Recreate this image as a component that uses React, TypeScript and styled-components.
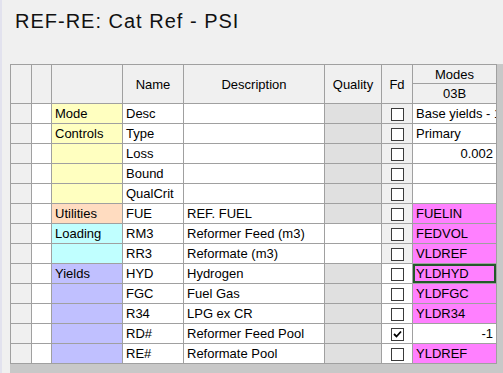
import React from "react";
import styled, { createGlobalStyle } from "styled-components";

const GlobalStyle = createGlobalStyle`
  html, body {
    margin: 0;
    padding: 0;
    background: #f0f0f0;
  }
  body {
    font-family: "Liberation Sans", Arial, sans-serif;
    color: #000;
  }
`;

const YELLOW = "#ffffc0";
const PEACH = "#ffdcc0";
const CYAN = "#c0ffff";
const LAVENDER = "#c0c0ff";
const MAGENTA = "#ff80ff";
const QUALITY_GREY = "#e0e0e0";
const FACE = "#f0f0f0";

const Page = styled.div`
  width: 503px;
  height: 373px;
  overflow: hidden;
  box-sizing: border-box;
  border-left: 2px solid #e2e2ee;
  background: ${FACE};
`;

const Title = styled.h1`
  margin: 0;
  padding: 11px 0 0 13px;
  height: 64px;
  box-sizing: border-box;
  font-size: 20px;
  line-height: 20px;
  font-weight: normal;
  letter-spacing: 1px;
  color: #111;
`;

const Workspace = styled.div`
  margin-left: 8px;
  height: 309px;
  background: #c8c8c8;
`;

const Grid = styled.div`
  display: grid;
  grid-template-columns: 20px 19px 70px 60px 140px 56px 30px 83px;
  grid-template-rows: 18px 19px repeat(13, 19px);
  gap: 1px;
  padding: 1px;
  width: max-content;
  background: #a0a0a0;
  font-size: 13px;
`;

const HeadCell = styled.div<{ $span?: boolean; $col?: number }>`
  background: ${FACE};
  display: flex;
  align-items: center;
  justify-content: center;
  grid-row: ${(p) => (p.$span ? "span 2" : "auto")};
  ${(p) => (p.$col ? `grid-column: ${p.$col};` : "")}
`;

const Cell = styled.div<{ $bg?: string; $right?: boolean; $selected?: boolean }>`
  background: ${(p) => p.$bg || "#fff"};
  line-height: 20px;
  padding: 0 3px;
  white-space: nowrap;
  overflow: hidden;
  text-align: ${(p) => (p.$right ? "right" : "left")};
  ${(p) => (p.$selected ? "box-shadow: inset 0 0 0 2px #24592a;" : "")}
`;

const CheckCell = styled.div<{ $bg?: string }>`
  background: ${(p) => p.$bg || "#fff"};
  display: flex;
  align-items: center;
  justify-content: center;
  padding-top: 2px;
`;

const Box = styled.span`
  width: 13px;
  height: 13px;
  box-sizing: border-box;
  border: 1px solid #3a3a3a;
  background: #fff;
  display: inline-flex;
  align-items: center;
  justify-content: center;
`;

type Row = {
  cat: string;
  catBg: string;
  name: string;
  desc?: string;
  qualityBg?: string;
  fdBg?: string;
  checked?: boolean;
  mode?: string;
  modeBg?: string;
  modeRight?: boolean;
  selected?: boolean;
};

const rows: Row[] = [
  { cat: "Mode", catBg: YELLOW, name: "Desc", fdBg: FACE, mode: "Base yields - 1" },
  { cat: "Controls", catBg: YELLOW, name: "Type", fdBg: FACE, mode: "Primary" },
  { cat: "", catBg: YELLOW, name: "Loss", fdBg: FACE, mode: "0.002", modeRight: true },
  { cat: "", catBg: YELLOW, name: "Bound", fdBg: FACE },
  { cat: "", catBg: YELLOW, name: "QualCrit", fdBg: FACE },
  { cat: "Utilities", catBg: PEACH, name: "FUE", desc: "REF. FUEL", fdBg: FACE, mode: "FUELIN", modeBg: MAGENTA },
  { cat: "Loading", catBg: CYAN, name: "RM3", desc: "Reformer Feed (m3)", qualityBg: "#fff", fdBg: FACE, mode: "FEDVOL", modeBg: MAGENTA },
  { cat: "", catBg: CYAN, name: "RR3", desc: "Reformate (m3)", qualityBg: "#fff", fdBg: FACE, mode: "VLDREF", modeBg: MAGENTA },
  { cat: "Yields", catBg: LAVENDER, name: "HYD", desc: "Hydrogen", mode: "YLDHYD", modeBg: MAGENTA, selected: true },
  { cat: "", catBg: LAVENDER, name: "FGC", desc: "Fuel Gas", mode: "YLDFGC", modeBg: MAGENTA },
  { cat: "", catBg: LAVENDER, name: "R34", desc: "LPG ex CR", mode: "YLDR34", modeBg: MAGENTA },
  { cat: "", catBg: LAVENDER, name: "RD#", desc: "Reformer Feed Pool", checked: true, mode: "-1", modeRight: true },
  { cat: "", catBg: LAVENDER, name: "RE#", desc: "Reformate Pool", mode: "YLDREF", modeBg: MAGENTA },
];

const Check = ({ checked }: { checked?: boolean }) => (
  <Box>
    {checked && (
      <svg width="9" height="9" viewBox="0 0 9 9">
        <path d="M1 4 L3.5 6.5 L8 1.5" fill="none" stroke="#000" strokeWidth="1.8" />
      </svg>
    )}
  </Box>
);

export default function App() {
  return (
    <Page>
      <GlobalStyle />
      <Title>REF-RE: Cat Ref - PSI</Title>
      <Workspace>
        <Grid>
          <HeadCell $span />
          <HeadCell $span />
          <HeadCell $span />
          <HeadCell $span>Name</HeadCell>
          <HeadCell $span>Description</HeadCell>
          <HeadCell $span>Quality</HeadCell>
          <HeadCell $span>Fd</HeadCell>
          <HeadCell $col={8}>Modes</HeadCell>
          <HeadCell $col={8}>03B</HeadCell>
          {rows.map((r) => (
            <React.Fragment key={r.name}>
              <Cell $bg={FACE} />
              <Cell />
              <Cell $bg={r.catBg}>{r.cat}</Cell>
              <Cell>{r.name}</Cell>
              <Cell>{r.desc}</Cell>
              <Cell $bg={r.qualityBg || QUALITY_GREY} />
              <CheckCell $bg={r.fdBg}>
                <Check checked={r.checked} />
              </CheckCell>
              <Cell $bg={r.modeBg} $right={r.modeRight} $selected={r.selected}>
                {r.mode}
              </Cell>
            </React.Fragment>
          ))}
        </Grid>
      </Workspace>
    </Page>
  );
}
